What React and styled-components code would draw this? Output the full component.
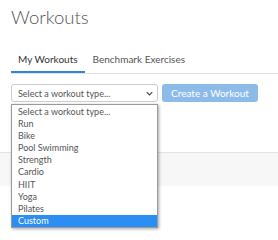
import React from 'react';
import styled, { createGlobalStyle } from 'styled-components';

const GlobalStyle = createGlobalStyle`
  html, body {
    margin: 0;
    background: #fff;
    font-family: Lato, "Open Sans", "Liberation Sans", sans-serif;
    color: #444;
  }
`;

const options = [
  'Select a workout type...',
  'Run',
  'Bike',
  'Pool Swimming',
  'Strength',
  'Cardio',
  'HIIT',
  'Yoga',
  'Pilates',
  'Custom',
];

function App() {
  return (
    <Page>
      <GlobalStyle />
      <Title>Workouts</Title>
      <Tabs>
        <Tab active>My Workouts</Tab>
        <Tab>Benchmark Exercises</Tab>
      </Tabs>
      <Toolbar>
        <SelectWrap>
          <SelectBox>
            <span>Select a workout type...</span>
            <Chevron viewBox="0 0 10 6">
              <path d="M1 1l4 4 4-4" fill="none" stroke="#444" strokeWidth="1.6" />
            </Chevron>
          </SelectBox>
          <OptionList>
            {options.map((o, i) => (
              <Option key={o} selected={i === options.length - 1}>
                {o}
              </Option>
            ))}
          </OptionList>
        </SelectWrap>
        <CreateButton>Create a Workout</CreateButton>
      </Toolbar>
      <Panel />
    </Page>
  );
}
export default App;

const Page = styled.div`
  padding: 0 0 0 11px;
  min-height: 240px;
`;

const Title = styled.h1`
  margin: 0;
  padding-top: 3px;
  font-size: 18.5px;
  font-weight: 300;
  line-height: 28px;
  color: #555;
`;

const Tabs = styled.div`
  display: flex;
  margin-top: 16px;
  border-bottom: 1px solid #e3e3e3;
  height: 26px;
`;

const Tab = styled.div`
  padding: 1px 7px 0;
  font-size: 10px;
  line-height: 22px;
  color: ${(p) => (p.active ? '#333' : '#555')};
  border-bottom: 2px solid ${(p) => (p.active ? '#2f86d8' : 'transparent')};
  height: 26px;
  box-sizing: border-box;
  & + & {
    margin-left: 1px;
  }
`;

const Toolbar = styled.div`
  display: flex;
  align-items: center;
  gap: 4px;
  margin-top: 10px;
`;

const SelectWrap = styled.div`
  position: relative;
`;

const SelectBox = styled.div`
  width: 147px;
  height: 18px;
  box-sizing: border-box;
  border: 1px solid #ccc;
  border-radius: 3px;
  display: flex;
  align-items: center;
  justify-content: space-between;
  padding: 0 4px 0 6px;
  font-size: 9px;
  color: #555;
`;

const Chevron = styled.svg`
  width: 7px;
  height: 5px;
`;

const OptionList = styled.div`
  position: absolute;
  top: 20px;
  left: 0;
  width: 147px;
  box-sizing: border-box;
  border: 1px solid #9a9a9a;
  background: #fff;
  box-shadow: 1px 1px 3px rgba(0, 0, 0, 0.35);
  z-index: 2;
  padding-top: 1px;
`;

const Option = styled.div`
  height: 12.1px;
  line-height: 12px;
  font-size: 9px;
  padding-left: 6px;
  color: ${(p) => (p.selected ? '#fff' : '#555')};
  background: ${(p) => (p.selected ? '#2b8ef2' : 'transparent')};
`;

const CreateButton = styled.button`
  width: 96px;
  height: 18px;
  border: none;
  border-radius: 3px;
  background: #8dbbe9;
  color: #fff;
  font-family: Lato, "Open Sans", "Liberation Sans", sans-serif;
  font-size: 10px;
  padding: 0;
`;

const Panel = styled.div`
  margin-top: 50px;
  margin-left: -11px;
  height: 33px;
  border-top: 1px solid #e3e3e3;
  background: #f7f7f7;
`;
